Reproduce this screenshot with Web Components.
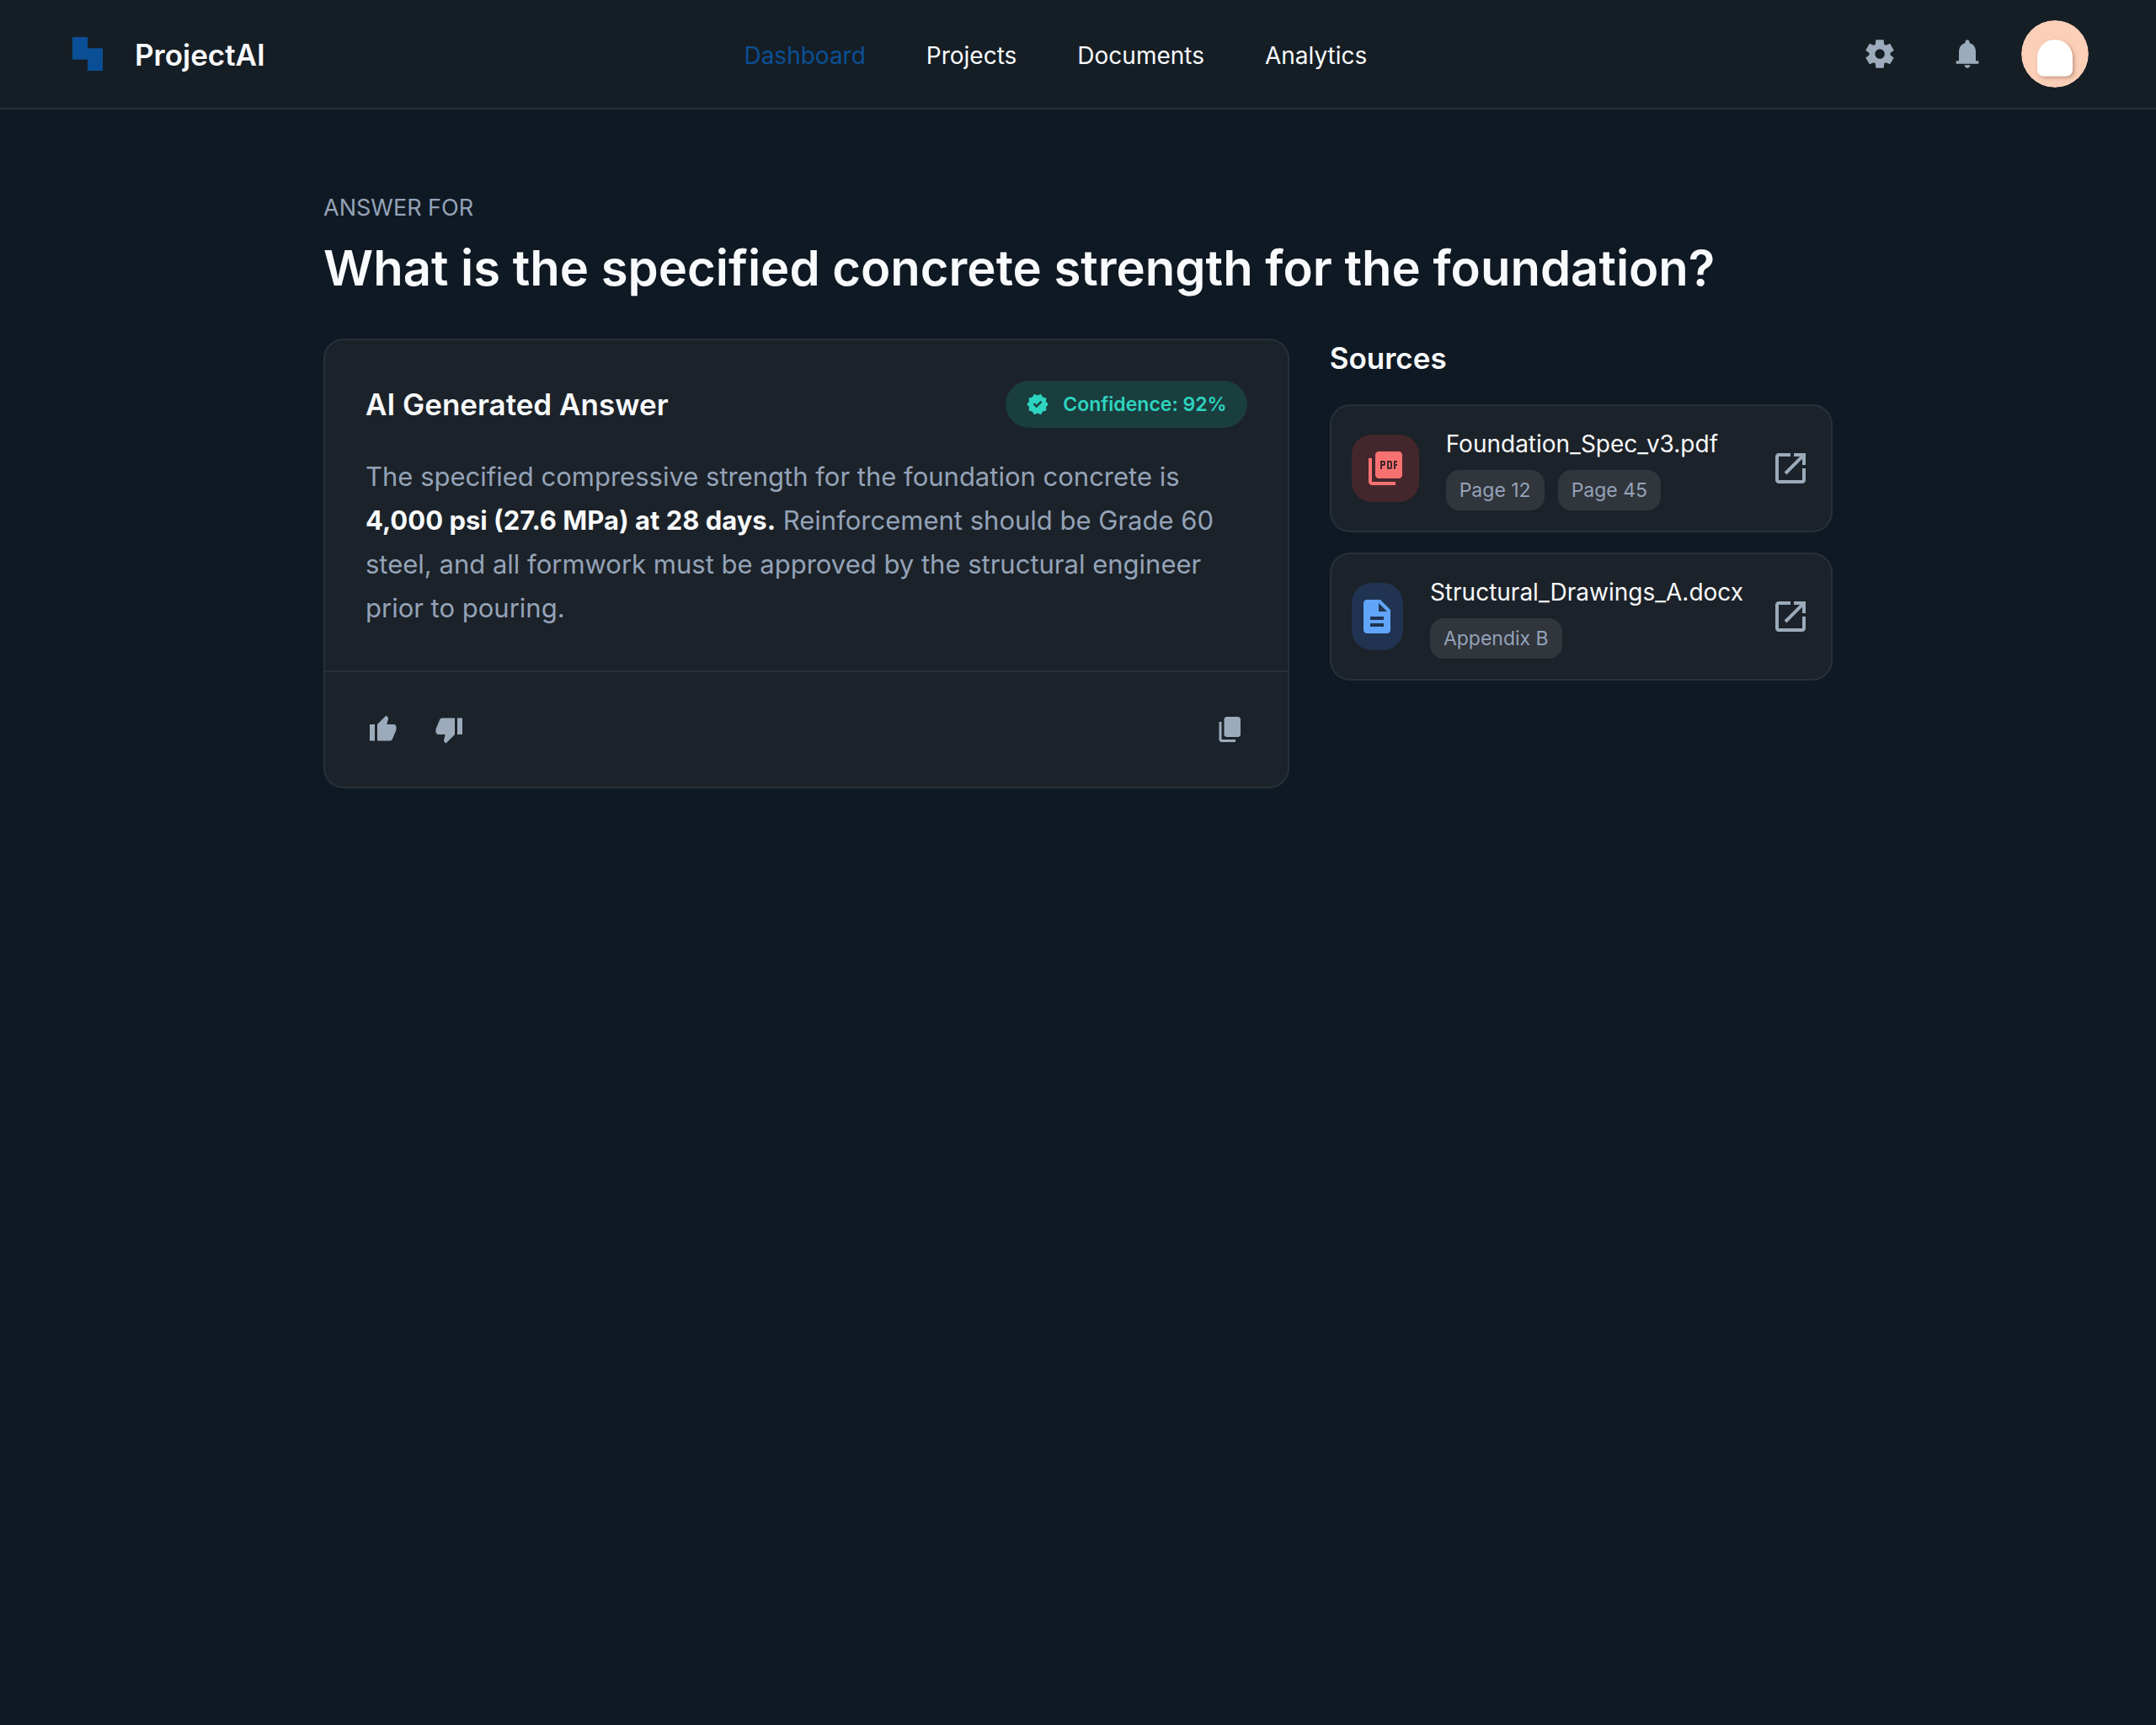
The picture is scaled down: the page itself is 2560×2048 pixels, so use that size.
<!DOCTYPE html>
<html lang="en">
<head>
<meta charset="utf-8">
<meta name="viewport" content="width=device-width, initial-scale=1">
<title>ProjectAI</title>
<style>
  :root {
    --bg: #0f1923;
    --header: #161e25;
    --surface: #1c2229;
    --border: #283039;
    --chip: #31353c;
    --primary: #0a4f96;
    --text: #f8fafc;
    --muted: #94a3b8;
    --icon: #9babbb;
  }

  body {
    margin: 0;
    background-color: var(--bg);
    color: var(--text);
    font-family: Inter, "Liberation Sans", sans-serif;
    font-size: 28px;
    line-height: 42px;
  }

  main {
    box-sizing: border-box;
    max-width: 1920px;
    margin: 0 auto;
    padding: 92px 64px;
  }

  .columns {
    display: flex;
    align-items: flex-start;
    gap: 48px;
  }

  .columns > answer-card {
    flex: 1;
  }

  .columns > source-list {
    flex: 0 0 calc(100% / 3);
  }
</style>
</head>
<body>
<app-header></app-header>
<main>
  <question-title>What is the specified concrete strength for the foundation?</question-title>
  <div class="columns">
    <answer-card confidence="92">
      The specified compressive strength for the foundation concrete is
      <strong>4,000 psi (27.6 MPa) at 28 days.</strong>
      Reinforcement should be Grade 60 steel, and all formwork must be approved by the structural engineer prior to pouring.
    </answer-card>
    <source-list>
      <source-item kind="pdf" name="Foundation_Spec_v3.pdf" refs="Page 12,Page 45"></source-item>
      <source-item kind="doc" name="Structural_Drawings_A.docx" refs="Appendix B"></source-item>
    </source-list>
  </div>
</main>

<script>
(() => {
  'use strict';

  // 960 unit grid, origin at the bottom left
  const ICONS = {
    settings: 'm370-80-16-128q-13-5-24.5-12T307-235l-119 50L78-375l103-78q-1-7-1-13.5v-27q0-6.5 1-13.5L78-585l110-190 119 50q11-8 23-15t24-12l16-128h220l16 128q13 5 24.5 12t22.5 15l119-50 110 190-103 78q1 7 1 13.5v27q0 6.5-2 13.5l103 78-110 190-118-50q-11 8-23 15t-24 12L590-80H370Zm112-260q58 0 99-41t41-99q0-58-41-99t-99-41q-59 0-99.5 41T342-480q0 58 40.5 99t99.5 41Z',
    bell: 'M160-200v-80h80v-280q0-83 50-147.5T420-792v-28q0-25 17.5-42.5T480-880q25 0 42.5 17.5T540-820v28q80 20 130 84.5T720-560v280h80v80H160ZM480-80q-33 0-56.5-23.5T400-160h160q0 33-23.5 56.5T480-80Z',
    verified: 'm344-60-76-128-144-32 14-148-98-112 98-112-14-148 144-32 76-128 136 58 136-58 76 128 144 32-14 148 98 112-98 112 14 148-144 32-76 128-136-58-136 58Zm94-278 226-226-56-58-170 170-86-84-56 56 142 142Z',
    up: 'M720-120H320v-520l280-280 50 50q7 7 11.5 19t4.5 23v14l-44 174h218q32 0 56 24t24 56v80q0 7-1.5 15t-4.5 15L794-168q-9 20-30 34t-44 14ZM240-640v520H80v-520h160Z',
    down: 'M240-840h400v520L360-40l-50-50q-7-7-11.5-19t-4.5-23v-14l44-174H120q-32 0-56-24t-24-56v-80q0-7 1.5-15t4.5-15l120-282q9-20 30-34t44-14Zm480 520v-520h160v520H720Z',
    copy: 'M360-240q-33 0-56.5-23.5T280-320v-480q0-33 23.5-56.5T360-880h360q33 0 56.5 23.5T800-800v480q0 33-23.5 56.5T720-240H360ZM200-80q-33 0-56.5-23.5T120-160v-560h80v560h440v80H200Z',
    pdf: 'M360-460h40v-80h40q17 0 28.5-11.5T480-580v-40q0-17-11.5-28.5T440-660h-80v200Zm40-120v-40h40v40h-40Zm120 120h80q17 0 28.5-11.5T640-500v-120q0-17-11.5-28.5T600-660h-80v200Zm40-40v-120h40v120h-40Zm120 40h40v-80h40v-40h-40v-40h40v-40h-80v200ZM320-240q-33 0-56.5-23.5T240-320v-480q0-33 23.5-56.5T320-880h480q33 0 56.5 23.5T880-800v480q0 33-23.5 56.5T800-240H320ZM160-80q-33 0-56.5-23.5T80-160v-560h80v560h560v80H160Z',
    doc: 'M320-240h320v-80H320v80Zm0-160h320v-80H320v80ZM240-80q-33 0-56.5-23.5T160-160v-640q0-33 23.5-56.5T240-880h320l240 240v480q0 33-23.5 56.5T720-80H240Zm280-520h200L520-800v200Z',
    open: 'M200-120q-33 0-56.5-23.5T120-200v-560q0-33 23.5-56.5T200-840h280v80H200v560h560v-280h80v280q0 33-23.5 56.5T760-120H200Zm188-212-56-56 372-372H560v-80h280v280h-80v-144L388-332Z',
  };

  class UiIcon extends HTMLElement {
    constructor() {
      super();
      this.attachShadow({ mode: 'open' });
    }

    connectedCallback() {
      this.shadowRoot.innerHTML = `
  <style>
  :host {
    display: block;
    flex: none;
    width: var(--icon-size, 36px);
    height: var(--icon-size, 36px);
  }

  svg {
    display: block;
    width: 100%;
    height: 100%;
  }
  </style>
  <svg viewBox="0 -960 960 960" fill="currentColor" aria-hidden="true"><path d="${ICONS[this.getAttribute('name')]}"/></svg>
  `;
    }
  }

  class IconButton extends HTMLElement {
    constructor() {
      super();
      this.attachShadow({ mode: 'open' });
    }

    connectedCallback() {
      this.shadowRoot.innerHTML = `
  <style>
  :host {
    display: block;
    flex: none;
    color: var(--icon);
  }

  button {
    display: flex;
    align-items: center;
    justify-content: center;
    width: var(--button-size, 40px);
    height: var(--button-size, 40px);
    padding: 0;
    border: 0;
    border-radius: 50%;
    color: inherit;
    background: none;
    cursor: pointer;
  }

  button:hover {
    color: var(--text);
  }
  </style>
  <button type="button" aria-label="${this.getAttribute('label')}"><ui-icon name="${this.getAttribute('icon')}"></ui-icon></button>
  `;
    }
  }

  class AppHeader extends HTMLElement {
    constructor() {
      super();
      const shadowRoot = this.attachShadow({ mode: 'open' });
      shadowRoot.innerHTML = `
  <style>
  :host {
    display: block;
    background-color: var(--header);
    border-bottom: 2px solid var(--border);
  }

  header {
    display: flex;
    align-items: center;
    justify-content: space-between;
    padding: 24px 80px;
  }

  .brand {
    display: flex;
    align-items: center;
    gap: 32px;
    font-size: 35px;
    font-weight: 600;
  }

  .brand svg {
    width: 48px;
    height: 48px;
    color: var(--primary);
  }

  .brand span {
    padding-top: 2px;
  }

  nav {
    display: flex;
    gap: 72px;
    padding-top: 4px;
  }

  a {
    color: inherit;
    text-decoration: none;
  }

  a[aria-current] {
    color: var(--primary);
  }

  .actions {
    display: flex;
    align-items: center;
    gap: 24px;
    --button-size: 80px;
    --icon-size: 40px;
  }

  .avatar {
    display: block;
    width: 80px;
    height: 80px;
    border-radius: 50%;
  }
  </style>
  <header>
   <div class="brand">
    <svg viewBox="0 0 48 48" aria-hidden="true"><path fill="currentColor" d="M24 4H6v26.667h18V44h18V17.333H24Z"/></svg>
    <span>ProjectAI</span>
   </div>
   <nav>
    <a href="#dashboard" aria-current="page">Dashboard</a>
    <a href="#projects">Projects</a>
    <a href="#documents">Documents</a>
    <a href="#analytics">Analytics</a>
   </nav>
   <div class="actions">
    <icon-button icon="settings" label="Settings"></icon-button>
    <icon-button icon="bell" label="Notifications"></icon-button>
    <svg class="avatar" viewBox="0 0 80 80" role="img" aria-label="Account">
     <defs>
      <filter id="soft" x="-30%" y="-30%" width="160%" height="160%">
       <feDropShadow dx="2" dy="2" stdDeviation="2" flood-color="#8a5a44" flood-opacity="0.5"/>
      </filter>
     </defs>
     <circle cx="40" cy="40" r="40" fill="#fbcfb8"/>
     <path filter="url(#soft)" fill="#fff" d="M19 44a21 21 0 0 1 42 0v14.500a8 8 0 0 1-8 8H27a8 8 0 0 1-8-8Z"/>
    </svg>
   </div>
  </header>
  `;
    }
  }

  class QuestionTitle extends HTMLElement {
    constructor() {
      super();
      const shadowRoot = this.attachShadow({ mode: 'open' });
      shadowRoot.innerHTML = `
  <style>
  :host {
    display: block;
    padding-bottom: 46px;
  }

  p {
    margin: 0;
    padding: 4px 0;
    color: var(--muted);
    font-size: 27px;
  }

  h1 {
    margin: 8px 0 0;
    font-size: 58px;
    line-height: 76px;
    font-weight: 600;
  }
  </style>
  <p>ANSWER FOR</p>
  <h1><slot></slot></h1>
  `;
    }
  }

  class AnswerCard extends HTMLElement {
    constructor() {
      super();
      this.attachShadow({ mode: 'open' });
    }

    connectedCallback() {
      this.shadowRoot.innerHTML = `
  <style>
  :host {
    display: block;
    min-width: 0;
    border: 2px solid var(--border);
    border-radius: 24px;
    background-color: var(--surface);
  }

  .body {
    padding: 48px;
  }

  .head {
    display: flex;
    align-items: center;
    justify-content: space-between;
    margin-bottom: 32px;
  }

  h2 {
    margin: 0;
    font-size: 35px;
    font-weight: 600;
  }

  .badge {
    display: flex;
    align-items: center;
    gap: 16px;
    padding: 10px 24px;
    border-radius: 28px;
    background-color: #1a3d3e;
    color: #2dd4bf;
    font-size: 23px;
    line-height: 36px;
    font-weight: 600;
    --icon-size: 28px;
  }

  p {
    margin: 0;
    color: var(--muted);
    font-size: 31px;
    line-height: 52px;
    font-weight: 400;
  }

  ::slotted(strong) {
    color: var(--text);
    font-weight: 700;
  }

  footer {
    display: flex;
    gap: 40px;
    padding: 48px;
    border-top: 2px solid var(--border);
  }

  .copy {
    margin-left: auto;
  }
  </style>
  <div class="body">
   <div class="head">
    <h2>AI Generated Answer</h2>
    <div class="badge"><ui-icon name="verified"></ui-icon><span>Confidence: ${this.getAttribute('confidence')}%</span></div>
   </div>
   <p><slot></slot></p>
  </div>
  <footer>
   <icon-button icon="up" label="Good answer"></icon-button>
   <icon-button icon="down" label="Bad answer"></icon-button>
   <icon-button class="copy" icon="copy" label="Copy answer"></icon-button>
  </footer>
  `;
    }
  }

  class SourceList extends HTMLElement {
    constructor() {
      super();
      const shadowRoot = this.attachShadow({ mode: 'open' });
      shadowRoot.innerHTML = `
  <style>
  :host {
    display: flex;
    flex-direction: column;
    gap: 24px;
    min-width: 0;
  }

  h2 {
    margin: 0;
    padding: 2px 0 10px;
    font-size: 35px;
    font-weight: 600;
  }
  </style>
  <h2>Sources</h2>
  <slot></slot>
  `;
    }
  }

  class SourceItem extends HTMLElement {
    constructor() {
      super();
      this.attachShadow({ mode: 'open' });
    }

    connectedCallback() {
      const kind = this.getAttribute('kind');
      const name = this.getAttribute('name');
      const chips = this.getAttribute('refs').split(',').map(ref => `<li>${ref}</li>`).join('');
      this.shadowRoot.innerHTML = `
  <style>
  :host {
    display: flex;
    align-items: center;
    gap: 32px;
    padding: 24px;
    border: 2px solid var(--border);
    border-radius: 24px;
    background-color: var(--surface);
    --button-size: 48px;
    --icon-size: 48px;
  }

  /* the tile gives way to a long file name */
  .tile {
    display: flex;
    align-items: center;
    justify-content: center;
    flex: 0 1 80px;
    min-width: 56px;
    height: 80px;
    border-radius: 24px;
  }

  .tile.pdf {
    background-color: #44272c;
    color: #f87171;
  }

  .tile.doc {
    background-color: #203350;
    color: #60a5fa;
  }

  .info {
    flex: 1 0 auto;
  }

  .name {
    margin-bottom: 10px;
  }

  ul {
    display: flex;
    gap: 16px;
    margin: 0;
    padding: 0;
    list-style: none;
  }

  li {
    padding: 6px 16px;
    border-radius: 16px;
    background-color: var(--chip);
    color: var(--muted);
    font-size: 23px;
    line-height: 36px;
  }
  </style>
  <div class="tile ${kind}"><ui-icon name="${kind}"></ui-icon></div>
  <div class="info">
   <div class="name">${name}</div>
   <ul>${chips}</ul>
  </div>
  <icon-button icon="open" label="Open ${name}"></icon-button>
  `;
    }
  }

  customElements.define('ui-icon', UiIcon);
  customElements.define('icon-button', IconButton);
  customElements.define('app-header', AppHeader);
  customElements.define('question-title', QuestionTitle);
  customElements.define('answer-card', AnswerCard);
  customElements.define('source-list', SourceList);
  customElements.define('source-item', SourceItem);
})();
</script>
</body>
</html>
